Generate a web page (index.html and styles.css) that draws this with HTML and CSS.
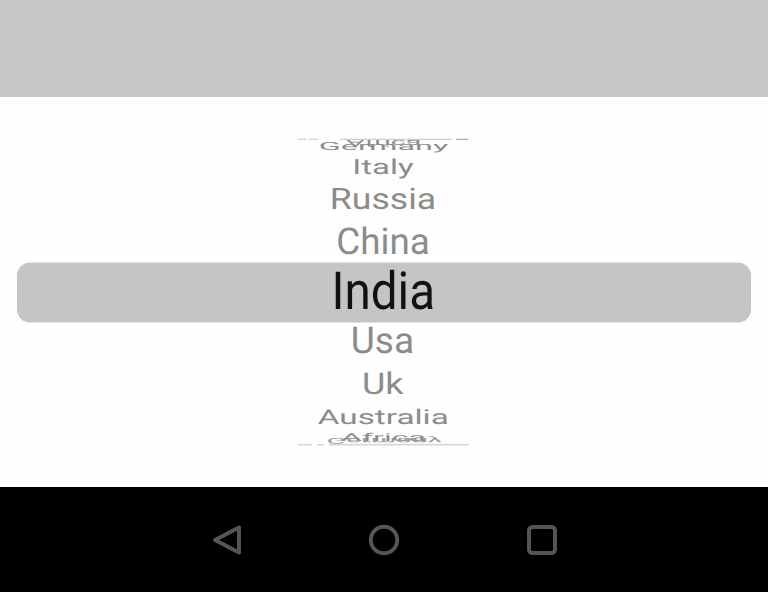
FILE: index.html
```html
<!DOCTYPE html>
<html lang="en">
<head>
<meta charset="utf-8">
<title>Country picker</title>
<link rel="stylesheet" href="styles.css">
</head>
<body>
<div class="screen">
  <div class="backdrop"></div>
  <main class="sheet">
    <svg class="wheel" viewBox="0 97 768 390" width="768" height="390">
      <rect class="selection" x="17" y="262.5" width="734" height="60" rx="13"/>
      <g class="edge">
        <path d="M298 139.300h8M309 139.300h9M340 139.300h112"/>
        <path class="edge-dark" d="M456 139.300h12"/>
        <path d="M298 444.800h14M317 444.800h7M329 444.800h140"/>
      </g>
      <g class="items">
        <text transform="translate(383.500 140.300) scale(.71 -.23)">Africa</text>
        <text transform="translate(383.500 150.300) scale(.81 .28)">Germany</text>
        <text transform="translate(383 173.500) scale(.826 .52)">Italy</text>
        <text transform="translate(383 208.900) scale(.89 .74)">Russia</text>
        <text transform="translate(383 254.300) scale(.92 .92)">China</text>
        <text class="active" transform="translate(383.300 309) scale(1.190 1.310)">India</text>
        <text transform="translate(382.500 353) scale(.928 .92)">Usa</text>
        <text transform="translate(382.800 394) scale(.9 .75)">Uk</text>
        <text transform="translate(383.300 424.300) scale(.832 .51)">Australia</text>
        <text transform="translate(383.500 440.700) scale(.8 .27)">Africa</text>
        <text class="back" transform="translate(384 438.300) scale(.72 -.2)">Germany</text>
      </g>
    </svg>
  </main>
  <nav class="navbar">
    <svg class="icon" viewBox="0 0 32 32"><path d="M29 3.500v25L5 16z"/></svg>
    <svg class="icon" viewBox="0 0 32 32"><circle cx="16" cy="16" r="13.200"/></svg>
    <svg class="icon" viewBox="0 0 32 32"><rect x="3" y="3" width="26" height="26" rx="3.500"/></svg>
  </nav>
</div>
</body>
</html>
```
FILE: styles.css
```css
body {
  margin: 0;
  font-family: Roboto, sans-serif;
}
.screen {
  display: grid;
  grid-template-rows: 97px 390px 105px;
  width: 768px;
  height: 592px;
  overflow: hidden;
}
.backdrop {
  background: #c8c8c8;
}
.sheet {
  background: #fefefe;
}
.wheel {
  display: block;
}
.selection {
  fill: #c5c5c7;
}
.items {
  fill: #8c8c8c;
  font-size: 40px;
  text-anchor: middle;
  text-rendering: geometricPrecision;
}
.active {
  fill: #111214;
}
.back {
  fill: #999;
}
.edge {
  stroke: #c4c4c4;
  stroke-width: 1;
  fill: none;
}
.edge-dark {
  stroke: #999;
}
.navbar {
  display: flex;
  justify-content: center;
  align-items: center;
  gap: 126px;
  background: #000;
}
.icon {
  width: 32px;
  height: 32px;
  fill: none;
  stroke: #555;
  stroke-width: 4;
  stroke-linejoin: round;
}
```
